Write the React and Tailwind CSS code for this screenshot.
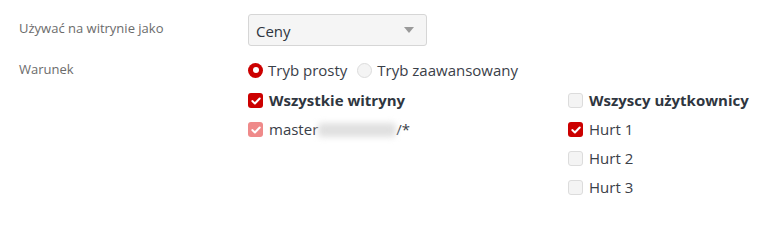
import React from "react";

function Check({ checked, faded }) {
  if (checked) {
    return (
      <span
        className={`flex h-[15px] w-[15px] shrink-0 items-center justify-center rounded-[3px] ${
          faded ? "bg-[#ef8a8a]" : "bg-[#cc0000]"
        }`}
      >
        <svg width="10" height="8" viewBox="0 0 10 8">
          <path d="M1.3 4.1 L3.9 6.5 L8.7 1.5" fill="none" stroke="#fff" strokeWidth="2" strokeLinecap="round" strokeLinejoin="round" />
        </svg>
      </span>
    );
  }
  return <span className="h-[15px] w-[15px] shrink-0 rounded-[3px] border border-[#dcdcdc] bg-[#f4f4f4]" />;
}

function Row({ checked, faded, bold, children }) {
  return (
    <div className="flex h-[29px] items-center gap-[6px]">
      <Check checked={checked} faded={faded} />
      <span className={bold ? "font-bold text-[#2f3640]" : "text-[#3a4048]"}>{children}</span>
    </div>
  );
}

export default function App() {
  return (
    <div
      className="h-[213px] w-[783px] bg-white pl-[19px] pt-[14px] text-[15px] text-[#333]"
      style={{ fontFamily: '"Open Sans", "Noto Sans", sans-serif' }}
    >
      <div className="flex">
        <div className="w-[229px] pt-[5px] text-[13px] text-[#6b6b6b]">Używać na witrynie jako</div>
        <div className="flex h-[32px] w-[179px] items-center justify-between rounded-[3px] border border-[#d6d6d6] bg-[#f5f5f5] pl-[7px] pr-[12px] text-[#2f3640]">
          <span className="translate-y-[1px]">Ceny</span>
          <svg width="10" height="6" viewBox="0 0 10 6">
            <path d="M0 0 L10 0 L5 6 Z" fill="#9a9a9a" />
          </svg>
        </div>
      </div>
      <div className="mt-[8px] flex">
        <div className="w-[229px] pt-[6px] text-[13px] text-[#6b6b6b]">Warunek</div>
        <div>
          <div className="mt-[3px] flex h-[26px] items-center text-[#3a4048]">
            <span className="flex h-[15px] w-[15px] items-center justify-center rounded-full bg-[#cc0000]">
              <span className="h-[6px] w-[6px] rounded-full bg-white" />
            </span>
            <span className="ml-[5px]">Tryb prosty</span>
            <span className="ml-[10px] h-[15px] w-[15px] rounded-full border border-[#dcdcdc] bg-[#f4f4f4]" />
            <span className="ml-[5px]">Tryb zaawansowany</span>
          </div>
          <div className="mt-[3px] flex">
            <div className="w-[320px]">
              <Row checked bold>Wszystkie witryny</Row>
              <Row checked faded>
                master
                <span className="inline-block h-[14px] w-[78px] translate-y-[2px] rounded-[4px] bg-[#e0e0e0] blur-[3px]" />
                /*
              </Row>
            </div>
            <div>
              <Row bold>Wszyscy użytkownicy</Row>
              <Row checked>Hurt 1</Row>
              <Row>Hurt 2</Row>
              <Row>Hurt 3</Row>
            </div>
          </div>
        </div>
      </div>
    </div>
  );
}
